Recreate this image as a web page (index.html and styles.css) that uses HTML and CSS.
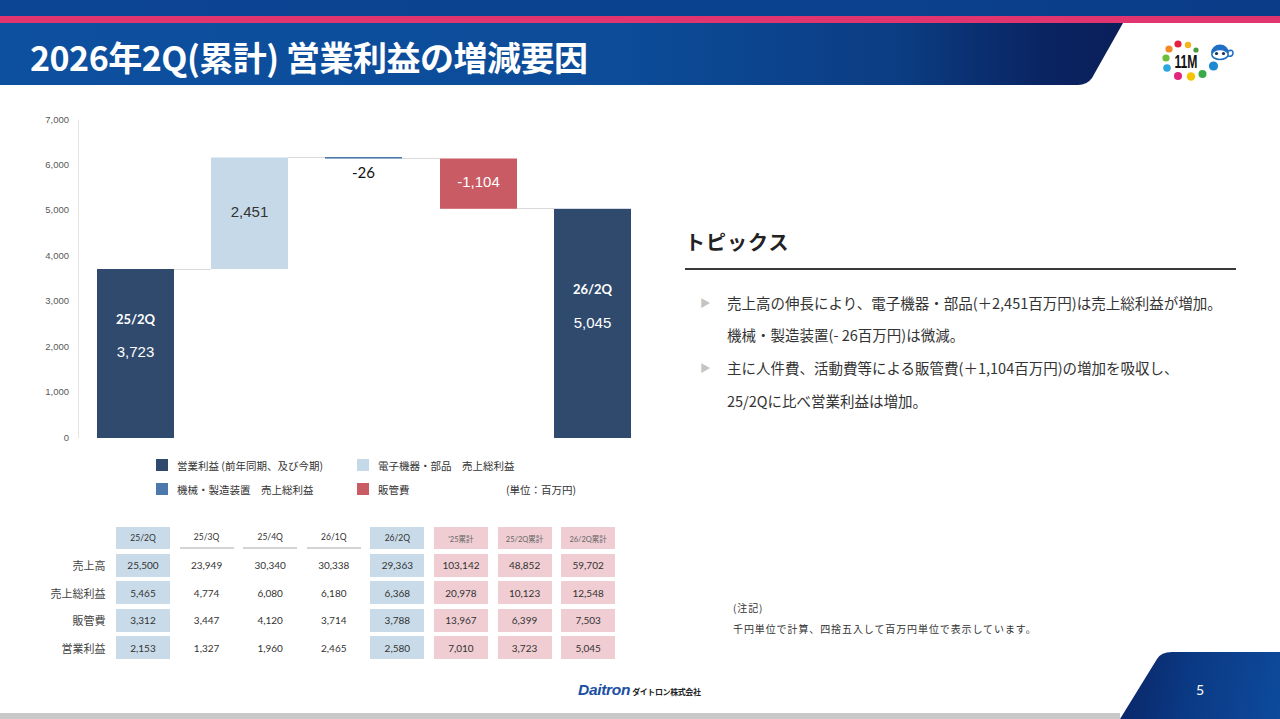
FILE: index.html
```html
<!DOCTYPE html>
<html lang="ja">
<head>
<meta charset="utf-8">
<title>2026年2Q(累計) 営業利益の増減要因</title>
<link rel="stylesheet" href="styles.css">
</head>
<body>
<div class="slide">
  <header class="header">
    <div class="topband"></div>
    <div class="pinkline"></div>
    <div class="titlerow">
      <div class="titlebar"><h1 class="title">2026年2Q(累計) 営業利益の増減要因</h1></div>
      <div class="brand">
        <svg class="brand-logo" width="85" height="46" viewBox="0 0 85 46">
          <circle cx="14" cy="11" r="3.6" fill="#f08a24"/>
          <circle cx="23" cy="6" r="3.6" fill="#e6213f"/>
          <circle cx="33" cy="7" r="3.2" fill="#f2b51c"/>
          <circle cx="41" cy="12" r="2.6" fill="#4a9a3a"/>
          <circle cx="11" cy="20" r="3.6" fill="#6cbf3c"/>
          <circle cx="12" cy="30" r="3.8" fill="#2ba6de"/>
          <circle cx="23" cy="38" r="4" fill="#e0267d"/>
          <circle cx="36" cy="38.5" r="4.2" fill="#f5c400"/>
          <circle cx="47.5" cy="36" r="4" fill="#3aaa48"/>
          <circle cx="58.5" cy="28" r="4.6" fill="#1e88d0"/>
          <text class="brand-text" x="19.5" y="30" textLength="23" lengthAdjust="spacingAndGlyphs">11M</text>
          <path d="M56 15 a9 8.5 0 0 1 18 0 z" fill="#1f6fc4"/>
          <ellipse cx="65" cy="16.5" rx="8.2" ry="5" fill="#fff" stroke="#1f6fc4" stroke-width="1.6"/>
          <circle cx="61.5" cy="15.5" r="1.6" fill="#1a2d55"/>
          <circle cx="68.5" cy="15.5" r="1.6" fill="#1a2d55"/>
          <path d="M73 13 q5 -2 5 2 q0 4 -5 3" fill="none" stroke="#1f6fc4" stroke-width="1.6"/>
        </svg>
      </div>
    </div>
  </header>

  <main class="main">
    <section class="left">
      <svg class="chart" width="660" height="345" viewBox="0 0 660 345">
        <line class="axis" x1="78.5" y1="20" x2="78.5" y2="338"/>
        <g class="ytick">
          <text x="69" y="20">7,000</text>
          <text x="69" y="65.4">6,000</text>
          <text x="69" y="110.9">5,000</text>
          <text x="69" y="156.3">4,000</text>
          <text x="69" y="201.7">3,000</text>
          <text x="69" y="247.1">2,000</text>
          <text x="69" y="292.6">1,000</text>
          <text x="69" y="338">0</text>
        </g>
        <g class="conn">
          <line x1="174" y1="169.5" x2="211" y2="169.5"/>
          <line x1="288" y1="57.5" x2="325" y2="57.5"/>
          <line x1="402" y1="58.5" x2="440" y2="58.5"/>
          <line x1="517" y1="108.5" x2="554" y2="108.5"/>
        </g>
        <rect class="c-navy" x="97" y="169" width="77" height="169"/>
        <rect class="c-light" x="211" y="57.5" width="77" height="111.5"/>
        <rect class="c-mid" x="325" y="57" width="77" height="1.6"/>
        <rect class="c-red" x="440" y="58.5" width="77" height="50.3"/>
        <rect class="c-navy" x="554" y="108.8" width="77" height="229.2"/>
        <text class="lbl-q" x="135.5" y="221">25/2Q</text>
        <text class="lbl-v w" x="135.5" y="253">3,723</text>
        <text class="lbl-v d" x="249.5" y="113">2,451</text>
        <text class="lbl-s" x="363.5" y="74">-26</text>
        <text class="lbl-v w" x="478.5" y="83">-1,104</text>
        <text class="lbl-q" x="592.5" y="191">26/2Q</text>
        <text class="lbl-v w" x="592.5" y="224">5,045</text>
      </svg>

      <div class="legend">
        <div class="lg-item"><span class="sw c-navy-bg"></span>営業利益 (前年同期、及び今期)</div>
        <div class="lg-item"><span class="sw c-light-bg"></span>電子機器・部品　売上総利益</div>
        <div></div>
        <div class="lg-item"><span class="sw c-mid-bg"></span>機械・製造装置　売上総利益</div>
        <div class="lg-item"><span class="sw c-red-bg"></span>販管費</div>
        <div class="lg-unit">(単位：百万円)</div>
      </div>

      <div class="table">
        <div></div>
        <div class="cell hd b">25/2Q</div>
        <div class="cell hd u">25/3Q</div>
        <div class="cell hd u">25/4Q</div>
        <div class="cell hd u">26/1Q</div>
        <div class="cell hd b">26/2Q</div>
        <div class="cell hd p sm">'25累計</div>
        <div class="cell hd p sm">25/2Q累計</div>
        <div class="cell hd p sm">26/2Q累計</div>

        <div class="rl">売上高</div>
        <div class="cell b">25,500</div>
        <div class="cell">23,949</div>
        <div class="cell">30,340</div>
        <div class="cell">30,338</div>
        <div class="cell b">29,363</div>
        <div class="cell p">103,142</div>
        <div class="cell p">48,852</div>
        <div class="cell p">59,702</div>

        <div class="rl">売上総利益</div>
        <div class="cell b">5,465</div>
        <div class="cell">4,774</div>
        <div class="cell">6,080</div>
        <div class="cell">6,180</div>
        <div class="cell b">6,368</div>
        <div class="cell p">20,978</div>
        <div class="cell p">10,123</div>
        <div class="cell p">12,548</div>

        <div class="rl">販管費</div>
        <div class="cell b">3,312</div>
        <div class="cell">3,447</div>
        <div class="cell">4,120</div>
        <div class="cell">3,714</div>
        <div class="cell b">3,788</div>
        <div class="cell p">13,967</div>
        <div class="cell p">6,399</div>
        <div class="cell p">7,503</div>

        <div class="rl">営業利益</div>
        <div class="cell b">2,153</div>
        <div class="cell">1,327</div>
        <div class="cell">1,960</div>
        <div class="cell">2,465</div>
        <div class="cell b">2,580</div>
        <div class="cell p">7,010</div>
        <div class="cell p">3,723</div>
        <div class="cell p">5,045</div>
      </div>
    </section>

    <section class="right">
      <h2 class="topics-title">トピックス</h2>
      <ul class="topics">
        <li><span class="bullet">▶</span><span class="ttext">売上高の伸長により、電子機器・部品(＋2,451百万円)は売上総利益が増加。<br>機械・製造装置(- 26百万円)は微減。</span></li>
        <li><span class="bullet">▶</span><span class="ttext">主に人件費、活動費等による販管費(＋1,104百万円)の増加を吸収し、<br>25/2Qに比べ営業利益は増加。</span></li>
      </ul>
      <div class="notes">
        <p>(注記)</p>
        <p>千円単位で計算、四捨五入して百万円単位で表示しています。</p>
      </div>
    </section>
  </main>

  <footer class="footer">
    <div class="footer-left">
      <div class="daitron"><span class="d-en">Daitron</span><span class="d-jp">ダイトロン株式会社</span></div>
    </div>
    <div class="pagebox">5</div>
  </footer>
</div>
</body>
</html>
```

FILE: styles.css
```css
* { box-sizing: border-box; margin: 0; padding: 0; }
html, body { width: 1280px; height: 719px; overflow: hidden; background: #fff; }
body { font-family: "Noto Sans CJK JP", "Noto Sans", sans-serif; color: #333; }

.slide { width: 1280px; height: 719px; display: flex; flex-direction: column; }

/* header */
.header { flex: 0 0 85px; display: flex; flex-direction: column; }
.topband { height: 16px; background: linear-gradient(90deg, #0c4594 0%, #0b428f 60%, #0a3c88 100%); }
.pinkline { height: 7px; background: #e0356f; }
.titlerow { flex: 1; display: flex; }
.titlebar {
  width: 1123px;
  background: linear-gradient(90deg, #0d509f 0%, #0c4c99 55%, #0b3d83 80%, #0a2462 93%, #0a1f5a 100%);
  clip-path: path('M0 0 H1123 L1092 55 Q1087 62 1078 62 H0 Z');
  padding: 12px 0 0 30px;
}
.title {
  color: #fff; font-size: 34px; font-weight: 700; letter-spacing: -0.5px;
  line-height: 44px; white-space: nowrap;
}
.brand { flex: 1; padding: 15px 0 0 32px; }
.brand-logo { display: block; }
.brand-text { font-family: "Liberation Sans", sans-serif; font-weight: 700; font-size: 18px; fill: #111; }

/* main */
.main { flex: 1; display: flex; min-height: 0; }
.left { width: 660px; padding-top: 15px; }
.chart { display: block; }
.axis { stroke: #e4e4e4; stroke-width: 1; }
.ytick text { font-family: "Liberation Sans", sans-serif; font-size: 9.5px; fill: #595959; text-anchor: end; dominant-baseline: middle; }
.conn line { stroke: #d9d9d9; stroke-width: 1; }
.c-navy { fill: #2f4a6d; }
.c-light { fill: #c6d9e8; }
.c-mid { fill: #4c78ab; }
.c-red { fill: #c85b63; }
.lbl-q { font-family: "Lato", sans-serif; font-weight: 700; font-size: 13px; fill: #fff; text-anchor: middle; dominant-baseline: middle; }
.lbl-v { font-family: "Liberation Sans", sans-serif; font-size: 15px; text-anchor: middle; dominant-baseline: middle; }
.lbl-v.w { fill: #fff; }
.lbl-v.d { fill: #333; }
.lbl-s { font-family: "Lato", sans-serif; font-size: 15px; fill: #111; text-anchor: middle; dominant-baseline: middle; }

/* legend */
.legend {
  margin-top: 8px; padding-left: 156px;
  display: grid; grid-template-columns: 201px 149px auto; grid-auto-rows: 24px; align-items: center;
  font-size: 10.5px; color: #333;
}
.lg-item { display: flex; align-items: center; gap: 9px; white-space: nowrap; }
.sw { width: 12px; height: 12px; flex: 0 0 12px; }
.c-navy-bg { background: #2f4a6d; }
.c-light-bg { background: #c6d9e8; }
.c-mid-bg { background: #4c78ab; }
.c-red-bg { background: #c85b63; }
.lg-unit { white-space: nowrap; }

/* table */
.table {
  margin-top: 26px;
  display: grid;
  grid-template-columns: 106.4px repeat(8, 54px);
  grid-template-rows: 22px repeat(4, 23px);
  column-gap: 9.6px; row-gap: 4.6px;
}
.cell {
  display: flex; align-items: center; justify-content: center;
  font-family: "Lato", "Noto Sans CJK JP", sans-serif; font-size: 10px; color: #333;
}
.cell.hd { font-size: 8.5px; }
.cell.hd.sm { font-size: 7.5px; color: #666; }
.cell.b { background: #c9dbe8; }
.cell.p { background: #efcdd2; }
.cell.u { border-bottom: 2px solid #d4d4d4; }
.rl {
  display: flex; align-items: center; justify-content: flex-end;
  font-size: 11px; color: #444; padding-right: 1px; white-space: nowrap;
}

/* right column */
.right { flex: 1; padding: 0 44px 0 25px; }
.topics-title {
  margin-top: 143px; font-size: 20px; font-weight: 700; line-height: 28px;
  letter-spacing: 1px; color: #222;
  padding-bottom: 12px; border-bottom: 2px solid #3a3a3a;
}
.topics { list-style: none; margin-top: 16.5px; }
.topics li { display: flex; padding-left: 15px; }
.bullet { width: 27px; flex: 0 0 27px; color: #c4c4c4; font-size: 10.5px; line-height: 32.7px; }
.ttext { font-size: 14.5px; line-height: 32.7px; color: #333; white-space: nowrap; }
.notes { margin-top: 180px; padding-left: 48px; font-size: 10px; line-height: 21px; letter-spacing: 0.9px; color: #333; }

/* footer */
.footer { flex: 0 0 67px; display: flex; }
.footer-left { flex: 1; border-bottom: 6px solid #c9c9c9; padding: 29px 0 0 578px; }
.daitron { display: flex; align-items: baseline; gap: 2px; white-space: nowrap; }
.d-en { font-family: "Liberation Sans", sans-serif; font-weight: 700; font-style: italic; font-size: 15.5px; color: #1a4fa3; letter-spacing: -0.3px; }
.d-jp { font-size: 8px; font-weight: 700; color: #222; letter-spacing: -0.4px; }
.pagebox {
  width: 160px;
  background: linear-gradient(100deg, #0a2566 0%, #0b3a85 45%, #0d4a9c 100%);
  clip-path: path('M52 0 H160 V67 H0 L37 7 Q41 0 52 0 Z');
  color: #fff; font-family: "Lato", sans-serif; font-size: 14px; line-height: 20px;
  text-align: center; padding-top: 28px;
}
```
